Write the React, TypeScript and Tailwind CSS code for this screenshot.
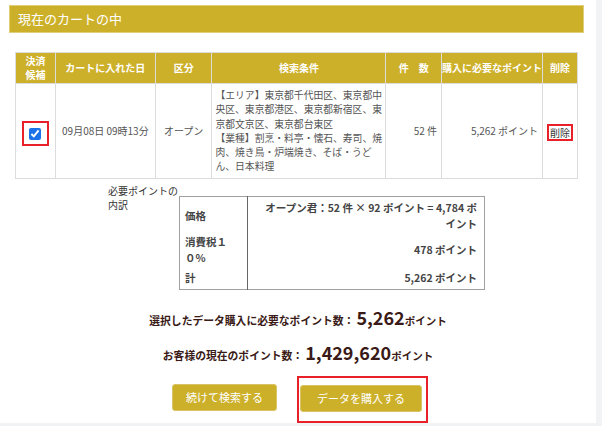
import React from 'react';

const font = { fontFamily: '"Noto Sans CJK JP", "Noto Sans", sans-serif' };

const App: React.FC = () => {
  return (
    <div className="w-[602px] h-[426px] bg-[#f2f3f5] overflow-hidden" style={font}>
      <div className="w-[596px] h-[423px] bg-white pt-[5px] text-[#555]">
        {/* Title bar */}
        <div className="ml-[9px] w-[575px] h-[28px] bg-[#cdb02a] border border-[#e0cf7a] flex items-center pl-[8px] text-white text-[13px]">
          現在のカートの中
        </div>

        {/* Cart table */}
        <table className="mt-[19px] ml-[15px] w-[563px] border-collapse text-[10px] leading-[14.3px]">
          <thead>
            <tr className="bg-[#cdb02a] text-white font-bold h-[31px]">
              <th className="w-[40px] border border-[#dcdcdc] leading-[14px]">決済<br />候補</th>
              <th className="w-[100px] border border-[#dcdcdc]">カートに入れた日</th>
              <th className="w-[57px] border border-[#dcdcdc]">区分</th>
              <th className="w-[175px] border border-[#dcdcdc]">検索条件</th>
              <th className="w-[56px] border border-[#dcdcdc]">件　数</th>
              <th className="w-[100px] border border-[#dcdcdc] whitespace-nowrap">購入に必要なポイント</th>
              <th className="w-[35px] border border-[#dcdcdc]">削除</th>
            </tr>
          </thead>
          <tbody>
            <tr className="h-[94px]">
              <td className="border border-[#dcdcdc] text-center">
                <span className="inline-flex items-center justify-center w-[27px] h-[25px] border-2 border-[#e8202a] mt-[6px]">
                  <input type="checkbox" defaultChecked className="w-[12px] h-[12px] accent-[#1a73e8]" />
                </span>
              </td>
              <td className="border border-[#dcdcdc] text-center whitespace-nowrap">09月08日 09時13分</td>
              <td className="border border-[#dcdcdc] text-center">オープン</td>
              <td className="border border-[#dcdcdc] px-[3px] py-[4px] text-[9.8px]">
                【エリア】東京都千代田区、東京都中央区、東京都港区、東京都新宿区、東京都文京区、東京都台東区
                <br />
                【業種】割烹・料亭・懐石、寿司、焼肉、焼き鳥・炉端焼き、そば・うどん、日本料理
              </td>
              <td className="border border-[#dcdcdc] text-right pr-[4px]">52 件</td>
              <td className="border border-[#dcdcdc] text-right pr-[4px] whitespace-nowrap">5,262 ポイント</td>
              <td className="border border-[#dcdcdc] text-center">
                <span className="inline-block border-2 border-[#e8202a] px-[1px] leading-[13px] text-[#333] mt-[3px]">削除</span>
              </td>
            </tr>
          </tbody>
        </table>

        {/* Breakdown */}
        <div className="flex items-start mt-[5px] ml-[108px]">
          <div className="w-[71px] text-[10px] leading-[14px] text-[#333]">必要ポイントの内訳</div>
          <table className="mt-[12px] w-[306px] border border-[#a0a0a0] border-collapse text-[10.5px] leading-[16px] font-bold text-[#444]">
            <tbody>
              <tr>
                <td className="w-[68px] border-r border-[#666] pl-[5px] pt-[3px] pb-[1px] align-middle">価格</td>
                <td className="text-right pr-[7px] pt-[3px] pb-[1px]">
                  オープン君：52 件 × 92 ポイント = 4,784 ポ<br />イント
                </td>
              </tr>
              <tr>
                <td className="border-r border-[#666] pl-[5px] py-[1px]">消費税１<br />０%</td>
                <td className="text-right pr-[7px]">478 ポイント</td>
              </tr>
              <tr>
                <td className="border-r border-[#666] pl-[5px] pt-[3px] pb-[3px]">計</td>
                <td className="text-right pr-[7px] pt-[3px] pb-[3px]">5,262 ポイント</td>
              </tr>
            </tbody>
          </table>
        </div>

        {/* Totals */}
        <div className="mt-[14px] flex justify-center items-baseline text-[#3a1a16] font-bold">
          <span className="text-[10.8px]">選択したデータ購入に必要なポイント数：</span>
          <span className="text-[18px] ml-[2px]">5,262</span>
          <span className="text-[10.5px]">ポイント</span>
        </div>
        <div className="mt-[8px] flex justify-center items-baseline text-[#3a1a16] font-bold">
          <span className="text-[10.8px]">お客様の現在のポイント数：</span>
          <span className="text-[18px] ml-[2px]">1,429,620</span>
          <span className="text-[10.5px]">ポイント</span>
        </div>

        {/* Buttons */}
        <div className="mt-[10px] flex items-start ml-[172px]">
          <button className="mt-[8px] w-[105px] h-[27px] rounded-[3px] bg-[#cdb02a] border border-[#d9c465] text-white text-[11px]">
            続けて検索する
          </button>
          <div className="ml-[20px] border-2 border-[#e8202a] pl-[1px] pr-[4px] pt-[6px] pb-[9px]">
            <button className="w-[122px] h-[27px] rounded-[3px] bg-[#cdb02a] border border-[#d9c465] text-white text-[11px]">
              データを購入する
            </button>
          </div>
        </div>
      </div>
    </div>
  );
};

export default App;
